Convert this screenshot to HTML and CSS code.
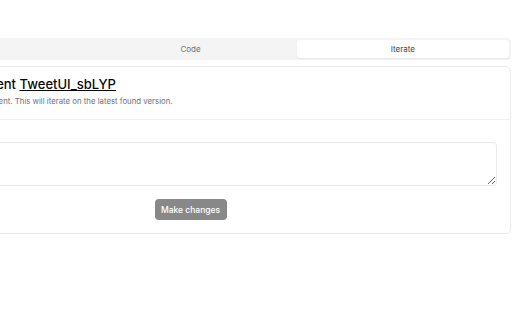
FILE: index.html
```html
<!DOCTYPE html>
<html lang="en">
<head>
    <meta charset="UTF-8">
    <meta name="viewport" content="width=device-width, initial-scale=1.0">
    <title>Iterate</title>
    <link rel="stylesheet" href="styles.css">
</head>
<body>
    <div class="panel">
        <div class="tab-list">
            <button class="tab">Preview</button>
            <button class="tab">Code</button>
            <button class="tab active">Iterate</button>
        </div>
        <div class="card">
            <div class="card-header">
                <h2 class="card-title">Iterate on component <a href="#">TweetUI_sbLYP</a></h2>
                <p class="card-desc">Explain changes to the component. This will iterate on the latest found version.</p>
            </div>
            <div class="card-body">
                <textarea class="prompt"></textarea>
                <div class="actions">
                    <button class="submit" disabled>Make changes</button>
                </div>
            </div>
        </div>
    </div>
</body>
</html>
```
FILE: styles.css
```css
body {
    margin: 0;
    background-color: #ffffff;
    font-family: Inter, "Liberation Sans", sans-serif;
    color: #09090b;
    overflow: hidden;
}

.panel {
    width: 641px;
    margin-left: -130px;
    padding-top: 38px;
}

.tab-list {
    display: grid;
    grid-template-columns: 1fr 1fr 1fr;
    height: 22px;
    padding: 2px;
    box-sizing: border-box;
    background-color: #f4f4f5;
    border-radius: 4px;
}

.tab {
    border: none;
    background: none;
    font-family: inherit;
    font-size: 8px;
    color: #71717a;
    border-radius: 3px;
    padding: 0;
}

.tab.active {
    background-color: #ffffff;
    color: #3f3f46;
    box-shadow: 0 1px 2px rgba(0, 0, 0, 0.06);
}

.card {
    margin-top: 6px;
    border: 1px solid #ececee;
    border-radius: 5px;
    box-shadow: 0 1px 2px rgba(0, 0, 0, 0.04);
}

.card-header {
    padding: 9px 12px 13px;
    border-bottom: 1px solid #f0f0f2;
}

.card-title {
    margin: 0;
    font-size: 13px;
    font-weight: 500;
    line-height: 16px;
}

.card-title a {
    color: #09090b;
}

.card-desc {
    margin: 4px 0 0;
    font-size: 7.8px;
    color: #71717a;
}

.card-body {
    padding: 22px 13px 13px;
}

.prompt {
    display: block;
    width: 100%;
    height: 44px;
    box-sizing: border-box;
    border: 1px solid #ececee;
    border-radius: 4px;
    resize: vertical;
}

.actions {
    display: flex;
    justify-content: center;
    margin-top: 13px;
}

.submit {
    width: 72px;
    height: 21px;
    border: none;
    border-radius: 4px;
    background-color: #888888;
    color: #ffffff;
    font-family: inherit;
    font-size: 8.5px;
    font-weight: 500;
}
```
